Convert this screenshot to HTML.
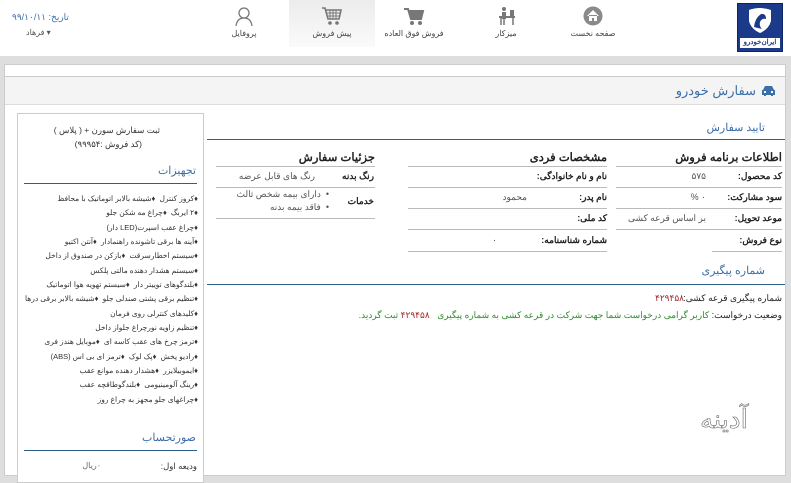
<!DOCTYPE html>
<html><head><meta charset="utf-8">
<style>
*{margin:0;padding:0;box-sizing:border-box}
body{width:791px;height:476px;overflow:hidden;background:#dedede;font-family:"Liberation Sans","Noto Sans CJK SC",sans-serif;font-size:9px;color:#333;position:relative}
.a{position:absolute;white-space:nowrap}
.r{direction:rtl;text-align:right}
.hdr{position:absolute;left:0;top:0;width:791px;height:56px;background:#fff}
.nav{position:absolute;top:0;height:47px;width:86px;text-align:center;font-size:8px;color:#444}
.nav svg{display:block;margin:6px auto 3px}
.line{position:absolute;height:1px;background:#bbb}
.bl{position:absolute;height:1px;background:#2d5f86}
.blue{color:#3b6fa8}
b{font-weight:bold;color:#222}
</style></head><body>
<div class="hdr">
 <div class="a" style="left:737px;top:3px;width:46px;height:49px;background:#1c3a8a;border:1px solid #0d2566"></div>
 <svg class="a" style="left:745px;top:7px" width="30" height="28" viewBox="0 0 30 28"><path d="M4 3 Q15 -1 26 3 L26 14 Q24 22 15 26 Q6 22 4 14Z" fill="#fff"/><path d="M9 20 Q10 11 16 7 Q21 6 21 12 Q17 11 15 15 Q14 19 17 22Z" fill="#1c3a8a"/></svg>
 <div class="a" style="left:740px;top:38px;width:40px;height:10px;background:#fff;color:#1c3a8a;font-size:7px;font-weight:bold;text-align:center;line-height:10px">ایران‌خودرو</div>
 <div class="nav" style="left:550px"><svg width="20" height="20"><circle cx="10" cy="10" r="9.5" fill="#8a8a8a"/><path d="M4 10 L10 4 L16 10 M6 9 V15 H9 V12 H11 V15 H14 V9" fill="#fff"/></svg>صفحه نخست</div>
 <div class="nav" style="left:463px"><svg width="20" height="20"><circle cx="8" cy="3" r="2" fill="#777"/><rect x="6" y="6" width="4" height="7" fill="#777"/><rect x="3" y="10" width="16" height="2" fill="#777"/><rect x="14" y="4" width="4" height="6" fill="#777"/><path d="M5 12V19M17 12V19M8 13V19" stroke="#777" stroke-width="1.5"/></svg>میزکار</div>
 <div class="nav" style="left:371px"><svg width="22" height="20"><path d="M1 3H5L8 13H18L20 5H6" fill="none" stroke="#777" stroke-width="2"/><rect x="7" y="5" width="12" height="7" fill="#777"/><circle cx="9" cy="17" r="2" fill="#777"/><circle cx="17" cy="17" r="2" fill="#777"/></svg>فروش فوق العاده</div>
 <div class="nav" style="left:289px;background:linear-gradient(#ececec,#fafafa)"><svg width="22" height="20"><path d="M1 2H4L7 13H18L20 4H5" fill="none" stroke="#777" stroke-width="1.6"/><path d="M6 7H19M7 10H18M9 4V13M12 4V13M15 4V13" stroke="#777"/><circle cx="9" cy="17" r="1.8" fill="#777"/><circle cx="16" cy="17" r="1.8" fill="#777"/></svg>پیش فروش</div>
 <div class="nav" style="left:201px"><svg width="20" height="20"><circle cx="10" cy="7" r="5" fill="none" stroke="#777" stroke-width="1.3"/><path d="M2 20 Q3 12 10 12 Q17 12 18 20" fill="none" stroke="#777" stroke-width="1.3"/></svg>پروفایل</div>
 <div class="a blue" style="left:12px;top:12px;font-size:9px;direction:rtl">تاریخ: ۹۹/۱۰/۱۱</div>
 <div class="a" style="left:26px;top:28px;font-size:8px;color:#555;direction:rtl">▾ فرهاد</div>
</div>
<div class="a" style="left:4px;top:64px;width:782px;height:412px;background:#fff;border:1px solid #ccc"></div>
<div class="a" style="left:5px;top:76px;width:780px;height:29px;background:#f4f4f4;border-top:1px solid #ccc;border-bottom:1px solid #ddd"></div>
<div class="a r blue" style="right:35px;top:83px;font-size:13px">سفارش خودرو</div>
<svg class="a" style="left:761px;top:85px" width="15" height="12"><path d="M2 5 L4 1 H11 L13 5 H14 V10 H12 V11 H10 V10 H5 V11 H3 V10 H1 V5Z" fill="#3b6fa8"/><rect x="3" y="6" width="2" height="2" fill="#fff"/><rect x="10" y="6" width="2" height="2" fill="#fff"/></svg>

<!-- sidebar -->
<div class="a" style="left:17px;top:113px;width:187px;height:370px;border:1px solid #ccc;background:#fff"></div>
<div class="a r" style="right:631px;top:125px;font-size:8.5px">ثبت سفارش سورن + ( پلاس )</div>
<div class="a r" style="right:649px;top:139px;font-size:8.5px">(کد فروش :۹۹۹۵۴)</div>
<div class="a r blue" style="right:595px;top:164px;font-size:11px">تجهیزات</div>
<div class="bl" style="left:24px;width:173px;top:183px"></div>
<div class="a r" style="right:593px;top:192px;font-size:7.5px;line-height:14.35px">
♦کروز کنترل&nbsp; ♦شیشه بالابر اتوماتیک با محافظ<br>♦۲ ایربگ&nbsp; ♦چراغ مه شکن جلو<br>♦چراغ عقب اسپرت(LED دار)<br>♦آینه ها برقی تاشونده راهنمادار&nbsp; ♦آنتن اکتیو<br>♦سیستم اخطارسرقت&nbsp; ♦بازکن در صندوق از داخل<br>♦سیستم هشدار دهنده مالتی پلکس<br>♦بلندگوهای توییتر دار&nbsp; ♦سیستم تهویه هوا اتوماتیک<br>♦تنظیم برقی پشتی صندلی جلو&nbsp; ♦شیشه بالابر برقی درها<br>♦کلیدهای کنترلی روی فرمان<br>♦تنظیم زاویه نورچراغ جلواز داخل<br>♦ترمز چرخ های عقب کاسه ای&nbsp; ♦موبایل هندز فری<br>♦رادیو پخش&nbsp; ♦پک لوک&nbsp; ♦ترمز ای بی اس (ABS)<br>♦ایموبیلایزر&nbsp; ♦هشدار دهنده موانع عقب<br>♦رینگ آلومینیومی&nbsp; ♦بلندگوطاقچه عقب<br>♦چراغهای جلو مجهز به چراغ روز</div>
<div class="a r blue" style="right:595px;top:431px;font-size:11px">صورتحساب</div>
<div class="bl" style="left:24px;width:173px;top:450px"></div>
<div class="a r" style="right:594px;top:461px;font-size:8.5px">ودیعه اول:</div>
<div class="a r" style="right:690px;top:461px;font-size:8px;color:#666">۰ریال</div>

<!-- main -->
<div class="a r blue" style="right:26px;top:121px;font-size:11px">تایید سفارش</div>
<div class="bl" style="left:207px;width:578px;top:139px"></div>
<div class="a r" style="right:9px;top:150px;font-size:11.5px"><b>اطلاعات برنامه فروش</b></div>
<div class="a r" style="right:184px;top:150px;font-size:11.5px"><b>مشخصات فردی</b></div>
<div class="a r" style="right:416px;top:150px;font-size:11.5px"><b>جزئیات سفارش</b></div>
<div class="line" style="left:616px;width:166px;top:166px"></div>
<div class="line" style="left:408px;width:199px;top:166px"></div>
<div class="line" style="left:216px;width:159px;top:166px"></div>
<div class="line" style="left:616px;width:166px;top:187px"></div><div class="line" style="left:616px;width:166px;top:208px"></div><div class="line" style="left:616px;width:166px;top:229px"></div><div class="line" style="left:712px;width:70px;top:251px"></div>
<div class="line" style="left:408px;width:199px;top:187px"></div><div class="line" style="left:408px;width:199px;top:208px"></div><div class="line" style="left:408px;width:199px;top:229px"></div><div class="line" style="left:408px;width:199px;top:251px"></div>
<div class="line" style="left:216px;width:159px;top:187px"></div><div class="line" style="left:216px;width:159px;top:218px"></div>
<div class="a r" style="right:9px;top:171px"><b>کد محصول:</b></div><div class="a r" style="right:85px;top:171px;color:#555">۵۷۵</div>
<div class="a r" style="right:9px;top:192px"><b>سود مشارکت:</b></div><div class="a r" style="right:85px;top:192px;color:#555">۰ %</div>
<div class="a r" style="right:9px;top:213px"><b>موعد تحویل:</b></div><div class="a r" style="right:85px;top:213px;color:#555">بر اساس قرعه کشی</div>
<div class="a r" style="right:9px;top:235px"><b>نوع فروش:</b></div>
<div class="a r" style="right:184px;top:171px"><b>نام و نام خانوادگی:</b></div>
<div class="a r" style="right:184px;top:192px"><b>نام پدر:</b></div><div class="a r" style="right:264px;top:192px;color:#555">محمود</div>
<div class="a r" style="right:184px;top:213px"><b>کد ملی:</b></div>
<div class="a r" style="right:184px;top:235px"><b>شماره شناسنامه:</b></div><div class="a r" style="right:294px;top:235px;color:#555">۰</div>
<div class="a r" style="right:417px;top:171px"><b>رنگ بدنه</b></div><div class="a r" style="right:476px;top:171px;color:#555">رنگ های قابل عرضه</div>
<div class="a r" style="right:417px;top:196px"><b>خدمات</b></div>
<div class="a r" style="right:462px;top:188px;color:#555;line-height:13px">•&nbsp; دارای بیمه شخص ثالث<br>•&nbsp; فاقد بیمه بدنه</div>
<div class="a r blue" style="right:26px;top:264px;font-size:11px">شماره پیگیری</div>
<div class="bl" style="left:207px;width:578px;top:284px"></div>
<div class="a r" style="right:9px;top:293px;color:#222">شماره پیگیری قرعه کشی:</div><div class="a r" style="right:107px;top:293px;color:#a02a2a">۴۲۹۴۵۸</div>
<div class="a r" style="right:9px;top:310px;color:#222">وضعیت درخواست: <span style="color:#2e8b2e">کاربر گرامی درخواست شما جهت شرکت در قرعه کشی به شماره پیگیری</span> &nbsp;&nbsp;<span style="color:#a02a2a">۴۲۹۴۵۸</span> <span style="color:#2e8b2e">ثبت گردید.</span></div>
<div class="a" style="left:700px;top:405px;font-size:26px;color:#fff;-webkit-text-stroke:0.6px #666;font-family:'DejaVu Sans',sans-serif">آدینه</div>
</body></html>
